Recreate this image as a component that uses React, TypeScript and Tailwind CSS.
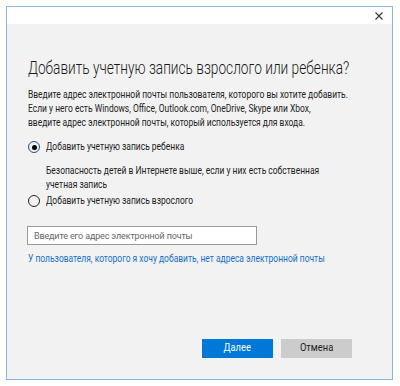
import { useState } from 'react'

const font = { fontFamily: 'Roboto, "Noto Sans", "Liberation Sans", sans-serif' }

function Radio({ checked, label, onClick }: { checked: boolean; label: string; onClick: () => void }) {
  return (
    <button onClick={onClick} className="flex h-4 items-center gap-[6px] text-left">
      <span
        className={`flex h-[12px] w-[12px] shrink-0 items-center justify-center rounded-full border-[1.5px] ${
          checked ? 'border-[#1d4f86]' : 'border-[#222]'
        }`}
      >
        {checked && <span className="h-[5px] w-[5px] rounded-full bg-black" />}
      </span>
      <span className="inline-block origin-left scale-x-[0.77] whitespace-nowrap text-[11px] leading-[14px] text-[#222]">
        {label}
      </span>
    </button>
  )
}

export default function App() {
  const [kind, setKind] = useState<'child' | 'adult'>('child')

  return (
    <div className="h-[386px] w-[400px] overflow-hidden bg-white pl-[6px] pt-[6px]" style={font}>
      <div className="flex h-[374px] w-[387px] flex-col overflow-hidden border border-[#86b6e2]">
        <div className="flex h-[17px] items-start justify-end bg-white pr-[9px] pt-[5px]">
          <svg width="8" height="8" viewBox="0 0 8 8">
            <path d="M0.5 0.5 L7.5 7.5 M7.5 0.5 L0.5 7.5" stroke="#333" strokeWidth="1.1" />
          </svg>
        </div>

        <div className="flex flex-1 flex-col items-start overflow-hidden bg-[#f2f2f2] pl-[21px] pt-[32px] pb-[21px]">
          <h1 className="origin-left scale-x-[0.76] whitespace-nowrap text-[18px] font-light leading-[24px] text-[#1a1a1a]">
            Добавить учетную запись взрослого или ребенка?
          </h1>

          <p className="mt-[8px] origin-left scale-x-[0.77] whitespace-nowrap text-[11px] leading-[14px] text-[#222]">
            Введите адрес электронной почты пользователя, которого вы хотите добавить.
            <br />
            Если у него есть Windows, Office, Outlook.com, OneDrive, Skype или Xbox,
            <br />
            введите адрес электронной почты, который используется для входа.
          </p>

          <div className="mt-[9px]">
            <Radio checked={kind === 'child'} label="Добавить учетную запись ребенка" onClick={() => setKind('child')} />
          </div>
          <p className="mt-[9px] ml-[18px] origin-left scale-x-[0.77] whitespace-nowrap text-[11px] leading-[14px] text-[#222]">
            Безопасность детей в Интернете выше, если у них есть собственная
            <br />
            учетная запись
          </p>
          <div className="mt-[1px]">
            <Radio checked={kind === 'adult'} label="Добавить учетную запись взрослого" onClick={() => setKind('adult')} />
          </div>

          <input
            placeholder="Введите его адрес электронной почты"
            className="mt-[17px] h-[19px] w-[230px] -ml-px border border-[#999] bg-white px-[6px] text-[9px] tracking-[-0.15px] text-[#222] placeholder:text-[#666] outline-none"
          />

          <a className="mt-[7px] origin-left scale-x-[0.77] whitespace-nowrap text-[11px] leading-[14px] text-[#1670c8]">
            У пользователя, которого я хочу добавить, нет адреса электронной почты
          </a>

          <div className="mt-auto flex gap-[8px] self-end pr-[40px]">
            <button className="h-[19px] w-[71px] bg-[#0078d7] text-[11px] text-white">
              <span className="inline-block scale-x-[0.85]">Далее</span>
            </button>
            <button className="h-[19px] w-[71px] bg-[#cccccc] text-[11px] text-[#222]">
              <span className="inline-block scale-x-[0.85]">Отмена</span>
            </button>
          </div>
        </div>
      </div>
    </div>
  )
}
